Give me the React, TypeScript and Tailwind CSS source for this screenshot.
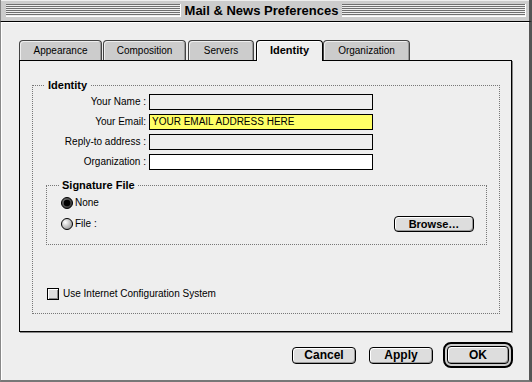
import React from "react";

const stripes =
  "bg-[repeating-linear-gradient(to_bottom,#6f6f6f_0px,#6f6f6f_1px,#eeeeee_1px,#eeeeee_2px)]";

function Radio({ checked }: { checked: boolean }) {
  return (
    <svg width="12" height="12" viewBox="0 0 12 12" className="shrink-0">
      <defs>
        <radialGradient id={checked ? "rg1" : "rg0"} cx="0.35" cy="0.35" r="0.7">
          <stop offset="0" stopColor={checked ? "#777" : "#ffffff"} />
          <stop offset="1" stopColor={checked ? "#333" : "#999"} />
        </radialGradient>
      </defs>
      <circle cx="6" cy="6" r="5.5" fill={`url(#${checked ? "rg1" : "rg0"})`} stroke="#000" strokeWidth="1" />
      {checked && <circle cx="6" cy="6" r="3.3" fill="#000" />}
    </svg>
  );
}

function Tab({ label, w, ml, selected }: { label: string; w: string; ml: string; selected?: boolean }) {
  if (selected) {
    return (
      <div
        className={`${w} ${ml} h-[21px] relative z-10 bg-[#eeeeee] border border-black border-b-0 rounded-t-[4px] shadow-[inset_1px_1px_0_#ffffff] flex items-center justify-center text-[11px] font-bold leading-none pb-[1px]`}
      >
        {label}
      </div>
    );
  }
  return (
    <div
      className={`${w} ${ml} h-[20px] bg-[#cccccc] border border-[#444] border-b-0 rounded-t-[4px] shadow-[inset_1px_1px_0_#eeeeee,inset_-1px_0_0_#999] flex items-center justify-center text-[10px] leading-none`}
    >
      {label}
    </div>
  );
}

function Field({ label, bg, value }: { label: string; bg: string; value?: string }) {
  return (
    <div className="flex items-center h-[16px]">
      <div className="w-[113px] text-right text-[10px] leading-none">{label}</div>
      <div className={`ml-[3px] w-[224px] h-[16px] border border-black ${bg} flex items-center pl-[2px] text-[10px] leading-none`}>
        {value}
      </div>
    </div>
  );
}

export default function App() {
  return (
    <div className="w-[532px] h-[382px] bg-[#eeeeee] flex flex-col overflow-hidden font-['Liberation_Sans',Arial,sans-serif] text-black">
      {/* Title bar */}
      <div className="h-[22px] shrink-0 bg-[#cccccc] border-b border-black border-l border-l-[#888] border-r-[3px] border-r-[#555] shadow-[inset_0_1px_0_#eeeeee] flex items-center pl-[5px] pr-[3px]">
        <div className={`w-[175px] h-[13px] ${stripes} border-b border-r border-[#ffffff]`} />
        <div className="w-[161px] text-center text-[13px] font-bold leading-none whitespace-nowrap">
          Mail &amp; News Preferences
        </div>
        <div className={`flex-1 h-[13px] ${stripes} border-b border-r border-[#ffffff]`} />
      </div>

      {/* Body */}
      <div className="flex-1 flex flex-col border-l border-l-[#888] border-r-[3px] border-r-[#555] border-b-2 border-b-[#777] shadow-[inset_1px_1px_0_#ffffff] pl-[18px] pt-[18px]">
        {/* Tabs */}
        <div className="flex h-[21px] items-start">
          <Tab label="Appearance" w="w-[83px]" ml="ml-0" />
          <Tab label="Composition" w="w-[83px]" ml="ml-[1px]" />
          <Tab label="Servers" w="w-[66px]" ml="ml-[2px]" />
          <Tab label="Identity" w="w-[67px]" ml="ml-[2px]" selected />
          <Tab label="Organization" w="w-[87px]" ml="ml-[0px]" />
        </div>

        {/* Panel */}
        <div className="-mt-px w-[493px] h-[272px] border border-black shadow-[1px_1px_0_#888] bg-[#eeeeee] pl-[12px] pt-[18px]">
          <fieldset className="w-[468px] h-[235px] border border-dotted border-[#777] m-0 p-0">
            <legend className="ml-[12px] px-[3px] font-bold text-[11px] leading-[13px]">Identity</legend>
            <div className="mt-[2px] flex flex-col gap-[4px]">
              <Field label="Your Name :" bg="bg-[#eeeeee]" />
              <Field label="Your Email:" bg="bg-[#ffff66]" value="YOUR EMAIL ADDRESS HERE" />
              <Field label="Reply-to address :" bg="bg-[#eeeeee]" />
              <Field label="Organization :" bg="bg-white" />
            </div>

            <fieldset className="ml-[13px] mt-[9px] w-[441px] h-[66px] border border-dotted border-[#777] m-0 p-0">
              <legend className="ml-[12px] px-[3px] font-bold text-[11px] leading-[13px]">Signature File</legend>
              <div className="mt-[5px] pl-[14px] flex items-center h-[12px] gap-[2px] text-[10px] leading-none">
                <Radio checked />
                <span>None</span>
              </div>
              <div className="mt-[7px] pl-[14px] pr-[12px] flex items-center h-[16px] text-[10px] leading-none">
                <Radio checked={false} />
                <span className="ml-[2px]">File :</span>
                <button className="ml-auto w-[80px] h-[16px] border border-black rounded-[4px] bg-[#dddddd] shadow-[inset_1px_1px_0_#ffffff,inset_-1px_-1px_0_#999] font-bold text-[11px] leading-none flex items-center justify-center">
                  Browse…
                </button>
              </div>
            </fieldset>

            <div className="mt-[43px] ml-[14px] flex items-center h-[12px] text-[10px] leading-none">
              <div className="w-[12px] h-[12px] border border-black bg-[#dddddd] shadow-[inset_1px_1px_0_#ffffff,inset_-1px_-1px_0_#888]" />
              <span className="ml-[4px]">Use Internet Configuration System</span>
            </div>
          </fieldset>
        </div>

        {/* Buttons */}
        <div className="mt-[10px] flex items-center h-[26px]">
          <button className="ml-[273px] w-[64px] h-[17px] border border-black rounded-[4px] bg-[#dddddd] shadow-[inset_1px_1px_0_#ffffff,inset_-1px_-1px_0_#999] font-bold text-[12px] leading-none flex items-center justify-center">
            Cancel
          </button>
          <button className="ml-[13px] w-[64px] h-[17px] border border-black rounded-[4px] bg-[#dddddd] shadow-[inset_1px_1px_0_#ffffff,inset_-1px_-1px_0_#999] font-bold text-[12px] leading-none flex items-center justify-center">
            Apply
          </button>
          <div className="ml-[10px] w-[70px] h-[26px] border-[2px] border-black rounded-[8px] bg-[#cccccc] p-[2px] flex">
            <button className="flex-1 border border-black rounded-[4px] bg-[#dddddd] shadow-[inset_1px_1px_0_#ffffff,inset_-1px_-1px_0_#999] font-bold text-[12px] leading-none flex items-center justify-center">
              OK
            </button>
          </div>
        </div>
      </div>
    </div>
  );
}
